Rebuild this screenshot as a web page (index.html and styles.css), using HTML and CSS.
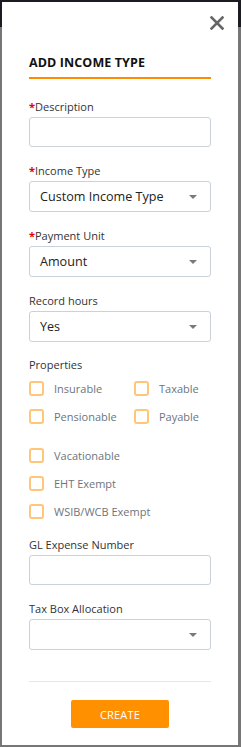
FILE: index.html
```html
<!DOCTYPE html>
<html lang="en">
<head>
    <meta charset="UTF-8">
    <meta name="viewport" content="width=device-width, initial-scale=1.0">
    <title>Add Income Type</title>
    <link rel="stylesheet" href="styles.css">
</head>
<body>
    <div class="modal">
        <div class="modal-top">
            <button class="close-btn" aria-label="Close">
                <svg width="14" height="14" viewBox="0 0 14 14">
                    <path d="M1.5 1.5 L12.5 12.5 M12.5 1.5 L1.5 12.5" stroke="#666" stroke-width="2.6" stroke-linecap="square"/>
                </svg>
            </button>
        </div>

        <h2 class="modal-title">ADD INCOME TYPE</h2>

        <div class="field">
            <label><span class="req">*</span>Description</label>
            <div class="input"></div>
        </div>

        <div class="field">
            <label><span class="req">*</span>Income Type</label>
            <div class="input select">Custom Income Type<span class="caret"></span></div>
        </div>

        <div class="field">
            <label><span class="req">*</span>Payment Unit</label>
            <div class="input select">Amount<span class="caret"></span></div>
        </div>

        <div class="field">
            <label>Record hours</label>
            <div class="input select">Yes<span class="caret"></span></div>
        </div>

        <div class="field props">
            <label>Properties</label>
            <div class="check-grid">
                <div class="check"><span class="box"></span>Insurable</div>
                <div class="check"><span class="box"></span>Taxable</div>
                <div class="check"><span class="box"></span>Pensionable</div>
                <div class="check"><span class="box"></span>Payable</div>
            </div>
            <div class="check-list">
                <div class="check"><span class="box"></span>Vacationable</div>
                <div class="check"><span class="box"></span>EHT Exempt</div>
                <div class="check"><span class="box"></span>WSIB/WCB Exempt</div>
            </div>
        </div>

        <div class="field">
            <label>GL Expense Number</label>
            <div class="input"></div>
        </div>

        <div class="field">
            <label>Tax Box Allocation</label>
            <div class="input select"><span class="caret"></span></div>
        </div>

        <div class="modal-footer">
            <button class="create-btn">CREATE</button>
        </div>
    </div>
</body>
</html>
```

FILE: styles.css
```css
html, body {
    margin: 0;
    height: 100%;
}
body {
    font-family: "Open Sans", Arial, sans-serif;
    background: linear-gradient(#1b1c21 0, #1b1c21 27px, #767676 27px);
    padding: 2px 3px 2px 2px;
    box-sizing: border-box;
    overflow: hidden;
}
.modal {
    background: #fff;
    height: 743px;
    padding: 14px 27px 0 27px;
    box-sizing: border-box;
}
.modal-top {
    display: flex;
    justify-content: flex-end;
    margin-right: -13px;
    height: 14px;
}
.close-btn {
    border: 0;
    background: none;
    padding: 0;
    width: 14px;
    height: 14px;
    display: block;
    cursor: pointer;
}
.close-btn svg {
    display: block;
}
.modal-title {
    margin: 25px 0 0;
    font-size: 12.5px;
    font-weight: 700;
    line-height: 16px;
    color: #111;
    letter-spacing: 0.1px;
    padding-bottom: 6px;
    border-bottom: 2px solid #ff8c00;
}
.field {
    margin-top: 20px;
}
.field + .field {
    margin-top: 16px;
}
.field + .props {
    margin-top: 15px;
}
.props + .field {
    margin-top: 18px;
}
label {
    display: block;
    font-size: 11px;
    line-height: 16px;
    color: #333;
    margin-bottom: 2px;
}
.req {
    color: #e60000;
    font-weight: 700;
}
.input {
    height: 30px;
    border: 1px solid #c9d1da;
    border-radius: 3px;
    box-sizing: border-box;
    font-size: 12.6px;
    color: #222;
    line-height: 28px;
    padding-left: 10px;
    position: relative;
}
.input.select {
    height: 31px;
    line-height: 29px;
}
.caret {
    position: absolute;
    right: 13px;
    top: 13px;
    width: 0;
    height: 0;
    border-left: 4px solid transparent;
    border-right: 4px solid transparent;
    border-top: 4px solid #7a7a7a;
}
.check-grid {
    display: grid;
    grid-template-columns: 105px 1fr;
    row-gap: 13px;
    margin-top: 8px;
}
.check-list {
    display: flex;
    flex-direction: column;
    gap: 13px;
    margin-top: 24px;
}
.check {
    display: flex;
    align-items: center;
    font-size: 11px;
    color: #6c757d;
    height: 15px;
}
.box {
    width: 15px;
    height: 15px;
    border: 2px solid #ffc67a;
    border-radius: 3px;
    box-sizing: border-box;
    margin-right: 10px;
}
.modal-footer {
    margin-top: 31px;
    border-top: 1px solid #e6e6e6;
    padding-top: 18px;
    display: flex;
    justify-content: center;
}
.create-btn {
    width: 98px;
    height: 28px;
    border: 0;
    border-radius: 2px;
    background: #ff9100;
    color: #fff;
    font-family: "Open Sans", Arial, sans-serif;
    font-size: 11px;
    letter-spacing: 0.2px;
    cursor: pointer;
}
```
